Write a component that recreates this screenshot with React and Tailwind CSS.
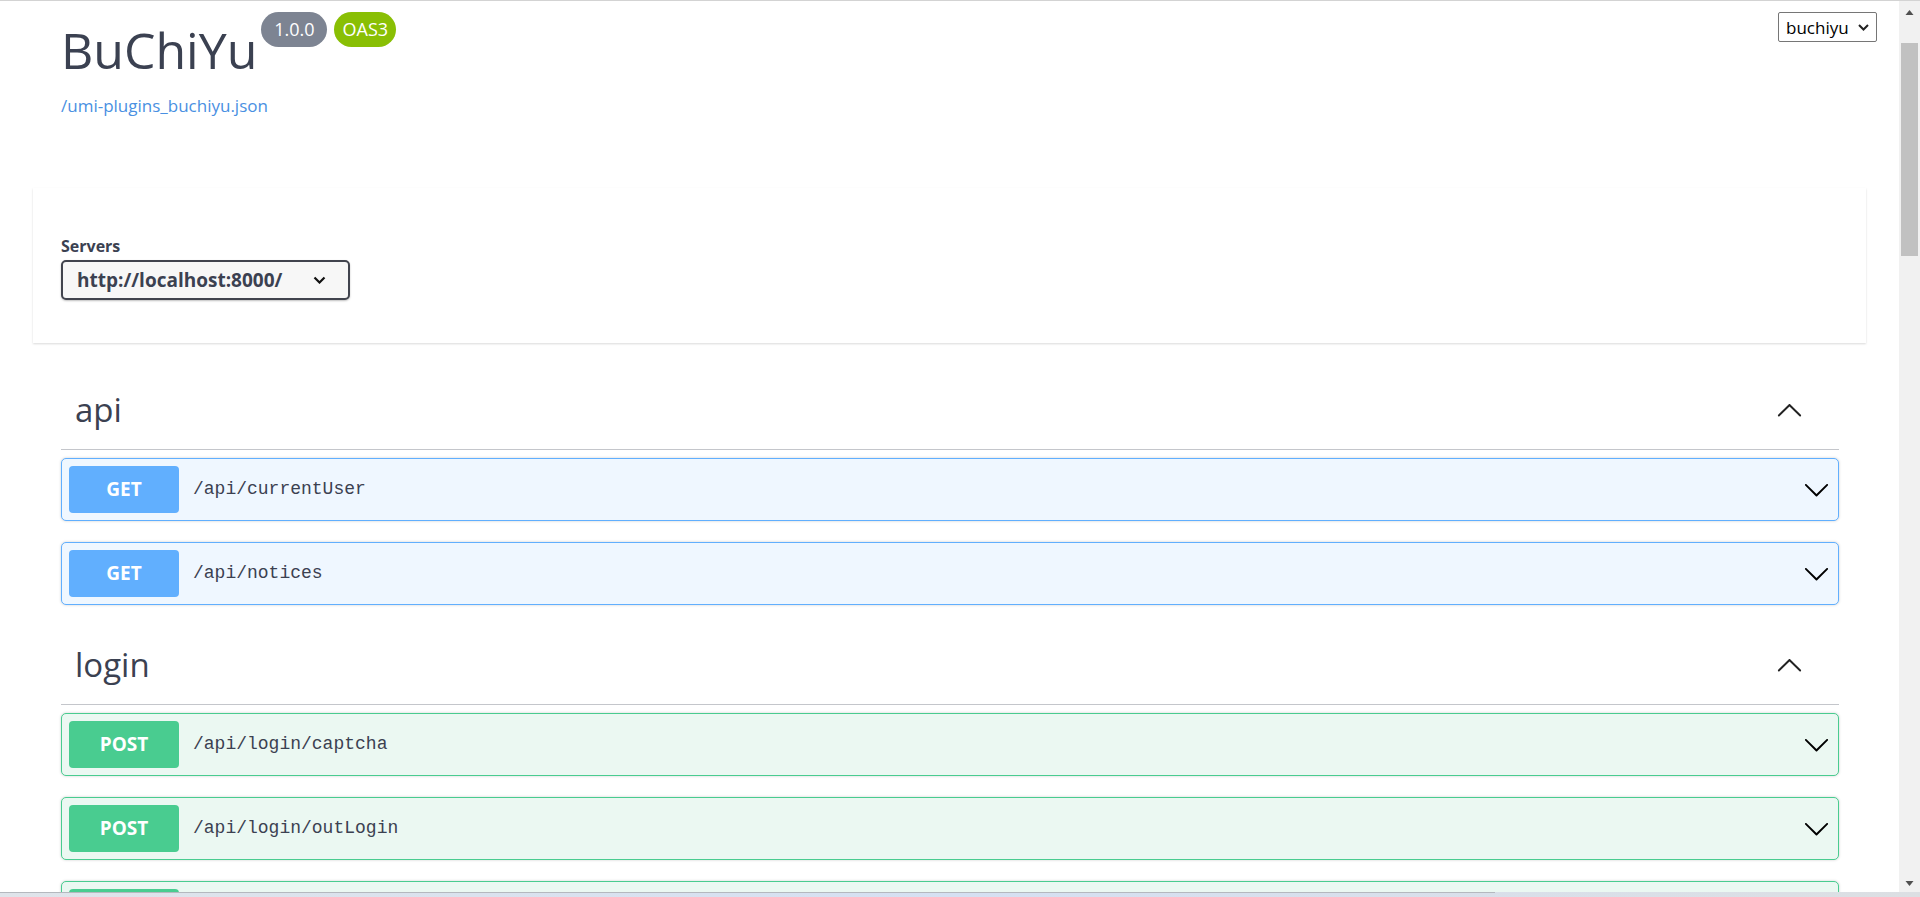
import React from 'react';

const ChevronDown = ({ className }) => (
    <svg viewBox="0 0 20 20" className={className} fill="currentColor">
        <path d="M17.418 6.109c.272-.268.709-.268.979 0s.271.701 0 .969l-7.908 7.83c-.27.268-.707.268-.979 0l-7.908-7.83c-.27-.268-.27-.701 0-.969.271-.268.709-.268.979 0L10 13.25l7.418-7.141z" />
    </svg>
);

const ChevronUp = ({ className }) => (
    <svg viewBox="0 0 20 20" className={className} fill="currentColor">
        <path d="M17.418 14.908c.272.268.709.268.979 0s.271-.701 0-.969l-7.908-7.83c-.27-.268-.707-.268-.979 0l-7.908 7.83c-.27.268-.27.701 0 .969.271.268.709.268.979 0L10 7.767l7.418 7.141z" />
    </svg>
);

const Operation = ({ method, path, label = true }) => {
    const isGet = method === 'GET';
    return (
        <div
            className={`h-[63px] flex items-center pl-[7px] pr-[7px] rounded-[5px] border shadow-[0_0_3px_rgba(0,0,0,0.19)] ${
                isGet ? 'border-[#61affe] bg-[#eff7ff]' : 'border-[#49cc90] bg-[#ebf8f2]'
            }`}
        >
            <span
                className={`w-[110px] h-[47px] shrink-0 rounded-[4px] flex items-center justify-center text-white font-bold text-[19px] ${
                    isGet ? 'bg-[#61affe]' : 'bg-[#49cc90]'
                }`}
            >
                {label && method}
            </span>
            <span className="ml-[14px] flex-1 font-['Liberation_Mono',monospace] text-[18px] text-[#3b4151]">
                {label && path}
            </span>
            <ChevronDown className="w-[27px] h-[27px] mr-[1px] text-black" />
        </div>
    );
};

const TagSection = ({ name, className, children }) => (
    <div className={className}>
        <div className="h-[73px] border-b border-[#c4c6cb] flex items-center pl-[14px] pb-[7px]">
            <h4 className="flex-1 text-[33px] text-[#3b4151]">{name}</h4>
            <ChevronUp className="w-[27px] h-[27px] mr-[36px] text-[#222]" />
        </div>
        <div className="pt-[8px] flex flex-col gap-[21px]">{children}</div>
    </div>
);

const Scrollbar = () => (
    <div className="w-[21px] bg-[#f1f1f1] flex flex-col items-center">
        <svg viewBox="0 0 8 5" className="w-[9px] h-[5px] mt-[9px]">
            <polygon points="0,5 4,0 8,5" fill="#505050" />
        </svg>
        <div className="w-[17px] h-[213px] bg-[#c1c1c1] mt-[28px]" />
        <div className="flex-1" />
        <svg viewBox="0 0 8 5" className="w-[9px] h-[5px] mb-[6px]">
            <polygon points="0,0 8,0 4,5" fill="#505050" />
        </svg>
    </div>
);

export default function App() {
    return (
        <div className="w-[1920px] h-[897px] overflow-hidden flex flex-col bg-white font-['Open_Sans',sans-serif]">
            <div className="h-px bg-[#d3d3d3]" />
            <div className="flex flex-1 min-h-0">
                <div className="relative flex-1 min-w-0 overflow-hidden">
                    {/* Info */}
                    <div className="pl-[61px] pt-[11px]">
                        <div className="flex items-start">
                            <h2 className="mt-[8px] text-[50px] leading-[60px] text-[#3b4151]">BuChiYu</h2>
                            <span className="ml-[4px] w-[66px] h-[35px] rounded-full bg-[#7d8492] text-white text-[18px] flex items-center justify-center">
                                1.0.0
                            </span>
                            <span className="ml-[7px] w-[62px] h-[35px] rounded-full bg-[#89bf04] text-white text-[18px] flex items-center justify-center">
                                OAS3
                            </span>
                        </div>
                        <a href="#" className="block mt-[14px] text-[17px] leading-[24px] text-[#4990e2] w-fit">
                            /umi-plugins_buchiyu.json
                        </a>
                    </div>

                    {/* Servers */}
                    <div className="mx-[33px] mt-[70px] h-[155px] bg-white shadow-[0_1px_2px_0_rgba(0,0,0,0.15)] pl-[28px] pt-[47px]">
                        <div className="text-[16px] leading-[22px] font-bold text-[#3b4151]">Servers</div>
                        <div className="mt-[3px] w-[289px] h-[40px] border-2 border-[#41444e] rounded-[5px] bg-[#f7f7f7] shadow-[0_1px_2px_0_rgba(0,0,0,0.25)] flex items-center pl-[14px]">
                            <span className="flex-1 text-[19px] font-bold text-[#3b4151]">http://localhost:8000/</span>
                            <svg viewBox="0 0 13 8" className="w-[13px] h-[8px] mr-[22px]" fill="none" stroke="#111" strokeWidth="2.2">
                                <path d="M1.5 1.5l5 5 5-5" />
                            </svg>
                        </div>
                    </div>

                    {/* Operations */}
                    <div className="ml-[61px] mr-[60px]">
                        <TagSection name="api" className="mt-[34px]">
                            <Operation method="GET" path="/api/currentUser" />
                            <Operation method="GET" path="/api/notices" />
                        </TagSection>
                        <TagSection name="login" className="mt-[27px]">
                            <Operation method="POST" path="/api/login/captcha" />
                            <Operation method="POST" path="/api/login/outLogin" />
                            <Operation method="POST" path="/api/login/account" label={false} />
                        </TagSection>
                    </div>

                    {/* Top-right select */}
                    <div className="absolute top-[11px] right-[22px] w-[99px] h-[30px] border border-[#767676] rounded-[2px] bg-white flex items-center pl-[7px]">
                        <span className="flex-1 text-[17px] text-black leading-none">buchiyu</span>
                        <svg viewBox="0 0 11 7" className="w-[11px] h-[7px] mr-[7px]" fill="none" stroke="#222" strokeWidth="2">
                            <path d="M1 1l4.5 4.5L10 1" />
                        </svg>
                    </div>
                </div>
                <Scrollbar />
            </div>
            <div className="h-[5px] flex flex-col bg-gradient-to-r from-[#dfe4ea] via-[#d5e0f2] to-[#dcdfe3]">
                <div className="h-px w-[1495px] bg-[#b4b8be]" />
            </div>
        </div>
    );
}
